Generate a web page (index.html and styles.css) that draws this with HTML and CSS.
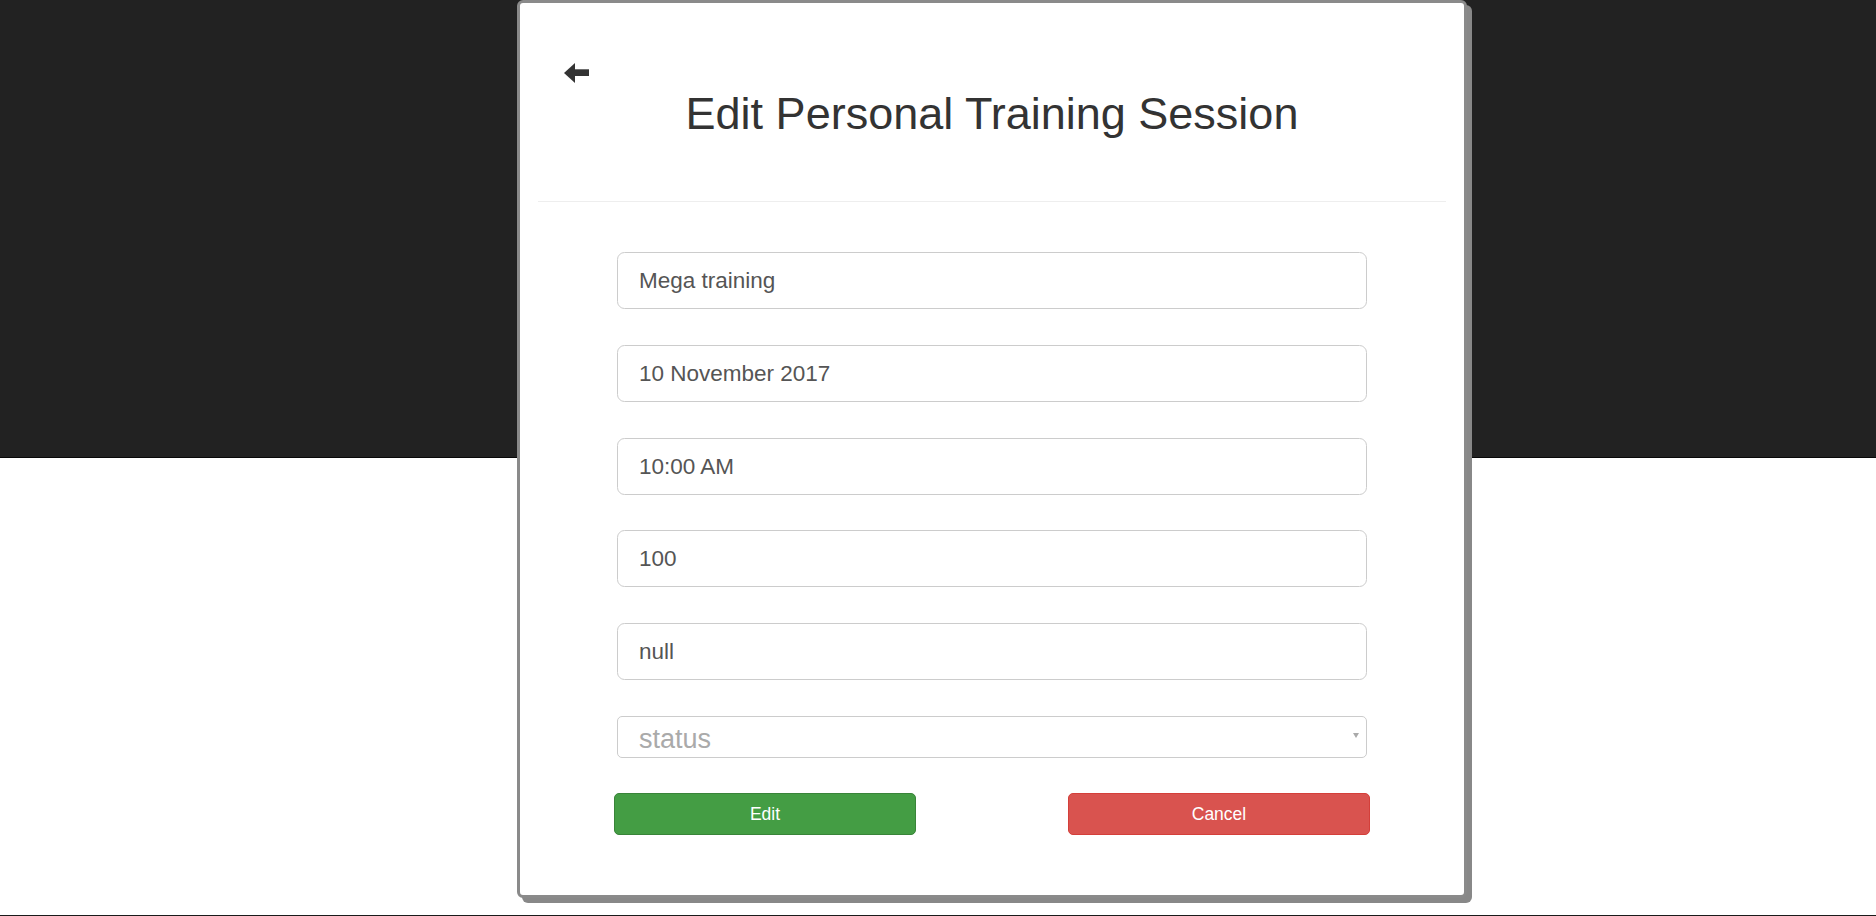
FILE: index.html
```html
<!DOCTYPE html>
<html lang="en">
<head>
<meta charset="utf-8">
<title>Edit Personal Training Session</title>
<link rel="stylesheet" href="styles.css">
</head>
<body>
<div class="page">
  <div class="topband"></div>
  <div class="main"></div>
  <div class="footer-line"></div>
</div>

<div class="modal">
  <div class="modal-header">
    <a class="back" href="#" aria-label="Back">
      <svg width="25" height="20" viewBox="0 0 25 20" aria-hidden="true">
        <polygon points="0,10 11,0 11,20" fill="#333"/>
        <rect x="10" y="6.3" width="15" height="6.7" fill="#333"/>
      </svg>
    </a>
    <h1 class="title">Edit Personal Training Session</h1>
  </div>
  <div class="divider"></div>
  <form class="form">
    <div class="field">Mega training</div>
    <div class="field">10 November 2017</div>
    <div class="field">10:00 AM</div>
    <div class="field">100</div>
    <div class="field">null</div>
    <div class="select"><span class="placeholder">status</span><span class="caret"></span></div>
    <div class="actions">
      <button type="button" class="btn btn-edit">Edit</button>
      <button type="button" class="btn btn-cancel">Cancel</button>
    </div>
  </form>
</div>
</body>
</html>
```

FILE: styles.css
```css
* { box-sizing: border-box; }

html, body {
  margin: 0;
  padding: 0;
  background: #fff;
  font-family: "Liberation Sans", Arial, sans-serif;
}

.page {
  display: flex;
  flex-direction: column;
  height: 916px;
}

.topband {
  height: 458px;
  background: #222;
  border-bottom: 1px solid #080808;
}

.main {
  flex: 1;
  background: #fff;
}

.footer-line {
  height: 1px;
  background: #1a1a1a;
}

.modal {
  position: absolute;
  left: 517px;
  top: 0;
  width: 950px;
  height: 898px;
  background: #fff;
  border: 3px solid #8a8a8a;
  border-radius: 6px;
  box-shadow: 5px 5px 0 #888;
  padding: 0 18px;
}

.modal-header {
  padding-top: 60px;
  display: flex;
  flex-direction: column;
}

.back {
  display: block;
  width: 25px;
  height: 20px;
  margin-left: 26px;
}

.back svg { display: block; }

.title {
  margin: 5.7px 0 0;
  font-size: 45px;
  line-height: 49.5px;
  font-weight: 500;
  color: #333;
  text-align: center;
}

.divider {
  height: 1px;
  background: #eee;
  margin-top: 62.8px;
}

.form {
  width: 750px;
  margin: 50px auto 0;
  display: flex;
  flex-direction: column;
}

.field {
  height: 57px;
  border: 1px solid #ccc;
  border-radius: 7.5px;
  padding: 0 21px;
  font-size: 22.5px;
  line-height: 55px;
  color: #555;
  margin-bottom: 35.8px;
}

.select {
  height: 42px;
  border: 1px solid #ccc;
  border-radius: 5px;
  padding: 0 7px 0 21px;
  display: flex;
  align-items: center;
  justify-content: space-between;
}

.placeholder {
  font-size: 27px;
  line-height: 40px;
  padding-top: 4px;
  color: #aaa;
}

.caret {
  width: 0;
  height: 0;
  border-left: 3px solid transparent;
  border-right: 3px solid transparent;
  border-top: 5px solid #aaa;
  margin-top: -2px;
}

.actions {
  display: flex;
  justify-content: space-between;
  margin: 35.3px -3px 0;
}

.btn {
  width: 302px;
  height: 42px;
  border-radius: 5px;
  font-family: "Liberation Sans", Arial, sans-serif;
  font-size: 17.5px;
  color: #fff;
  cursor: pointer;
  padding: 0;
}

.btn-edit {
  background: #449d44;
  border: 1px solid #398439;
}

.btn-cancel {
  background: #d9534f;
  border: 1px solid #d43f3a;
}
```
